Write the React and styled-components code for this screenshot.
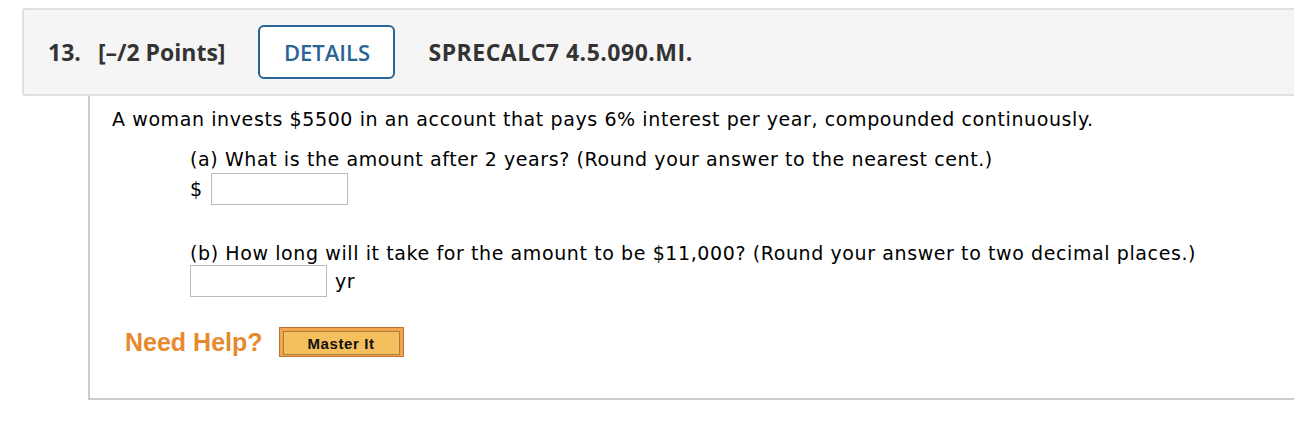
import React from 'react';
import styled, { createGlobalStyle } from 'styled-components';

const GlobalStyle = createGlobalStyle`
  html, body {
    margin: 0;
    padding: 0;
    background: #fff;
    overflow: hidden;
  }
`;

const Page = styled.div`
  padding: 8px 0 0 22px;
  width: 1320px;
`;

const QuestionHeader = styled.div`
  display: flex;
  align-items: center;
  gap: 33px;
  height: 84px;
  padding-left: 24px;
  background-color: #f5f5f5;
  border: 2px solid #e0e0e0;
  border-radius: 3px;
  font-family: 'Open Sans', sans-serif;
  color: #333;
`;

const Points = styled.div`
  display: flex;
  gap: 17px;
  font-size: 23px;
  font-weight: 700;
`;

const DetailsButton = styled.button`
  height: 54px;
  width: 137px;
  border: 2px solid #2a6496;
  border-radius: 6px;
  background: #fff;
  color: #2a6496;
  font-family: 'Open Sans', sans-serif;
  font-size: 22px;
  font-weight: 600;
  cursor: pointer;
`;

const Reference = styled.div`
  font-size: 23px;
  font-weight: 700;
  letter-spacing: 0.5px;
`;

const QuestionBody = styled.div`
  margin-left: 66px;
  padding: 12px 0 41px 22px;
  border-left: 2px solid #ccc;
  border-bottom: 2px solid #ccc;
  font-family: 'DejaVu Sans', Verdana, sans-serif;
  font-size: 19px;
  letter-spacing: 0.6px;
  color: #000;
`;

const Prompt = styled.p`
  margin: 0 0 18px;
  line-height: 22px;
`;

const Part = styled.div`
  margin-left: 78px;
  margin-bottom: ${p => p.$gap || 0}px;
`;

const PartText = styled.div`
  line-height: 22px;
  margin-bottom: ${p => p.$space ?? 3}px;
`;

const AnswerRow = styled.div`
  display: flex;
  align-items: center;
  gap: 8px;
`;

const AnswerInput = styled.input`
  width: 137px;
  height: 32px;
  box-sizing: border-box;
  border: 1px solid #bbb;
  margin: 0;
`;

const HelpRow = styled.div`
  display: flex;
  align-items: center;
  gap: 16px;
  margin-left: 13px;
`;

const NeedHelp = styled.span`
  font-family: 'Liberation Sans', Arial, sans-serif;
  font-weight: 700;
  font-size: 25px;
  letter-spacing: 0;
  color: #e8892e;
`;

const MasterButton = styled.button`
  width: 125px;
  height: 30px;
  padding: 3px;
  box-sizing: border-box;
  border: 1px solid #b87430;
  background: #f0a64c;
  cursor: pointer;
`;

const MasterInner = styled.span`
  display: flex;
  align-items: center;
  justify-content: center;
  height: 100%;
  border: 1px solid #b07a3a;
  background: #f4bf5d;
  font-family: 'Liberation Sans', Arial, sans-serif;
  font-weight: 700;
  font-size: 15px;
  letter-spacing: 0.6px;
  color: #111;
`;

const App = () => {
  return (
    <Page>
      <GlobalStyle />
      <QuestionHeader>
        <Points>
          <span>13.</span>
          <span>[–/2 Points]</span>
        </Points>
        <DetailsButton>DETAILS</DetailsButton>
        <Reference>SPRECALC7 4.5.090.MI.</Reference>
      </QuestionHeader>
      <QuestionBody>
        <Prompt>A woman invests $5500 in an account that pays 6% interest per year, compounded continuously.</Prompt>
        <Part $gap={37}>
          <PartText>(a) What is the amount after 2 years? (Round your answer to the nearest cent.)</PartText>
          <AnswerRow>
            <span>$</span>
            <AnswerInput />
          </AnswerRow>
        </Part>
        <Part $gap={30}>
          <PartText $space={1}>(b) How long will it take for the amount to be $11,000? (Round your answer to two decimal places.)</PartText>
          <AnswerRow>
            <AnswerInput />
            <span>yr</span>
          </AnswerRow>
        </Part>
        <HelpRow>
          <NeedHelp>Need Help?</NeedHelp>
          <MasterButton>
            <MasterInner>Master It</MasterInner>
          </MasterButton>
        </HelpRow>
      </QuestionBody>
    </Page>
  );
};

export default App;
